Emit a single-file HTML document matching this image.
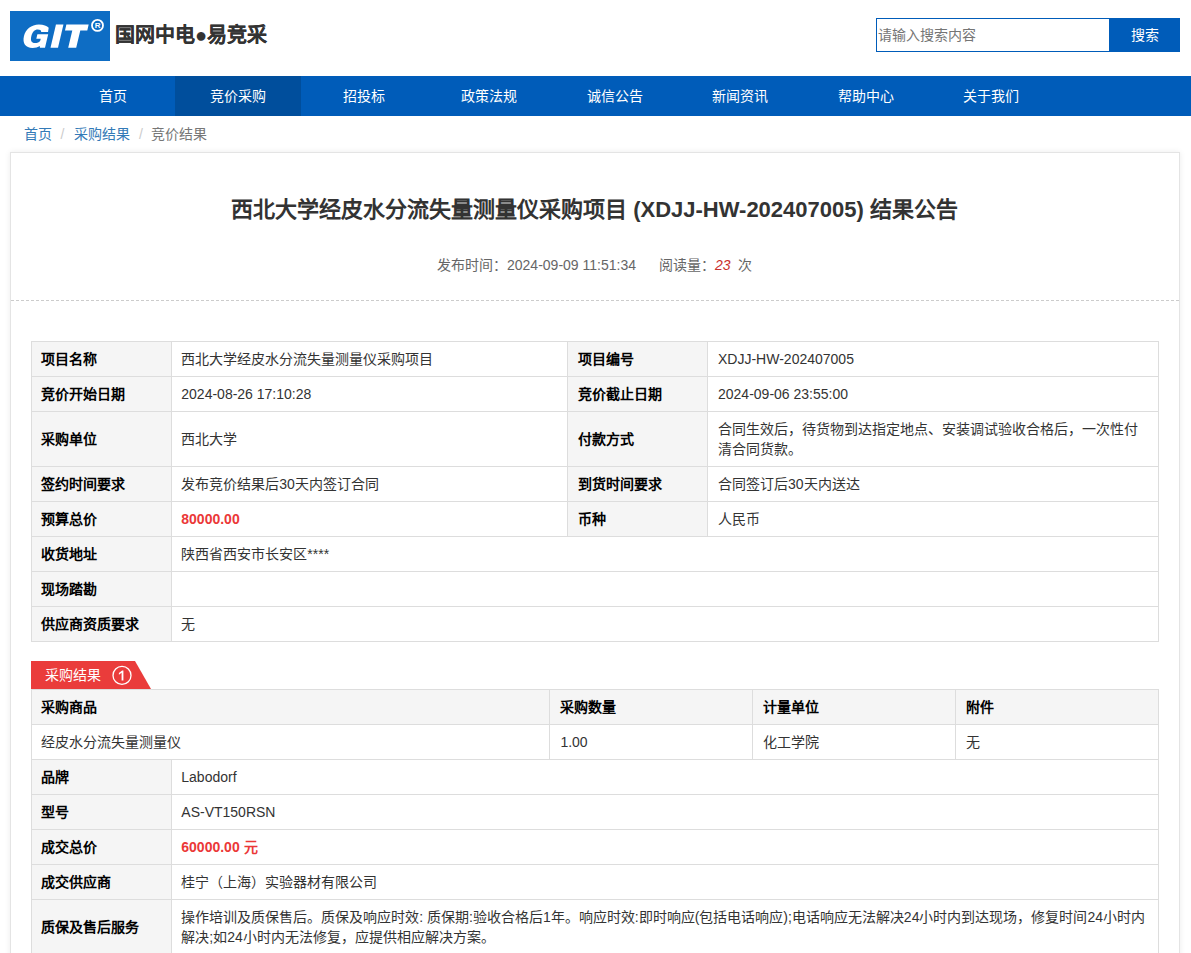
<!DOCTYPE html>
<html lang="zh-CN">
<head>
<meta charset="utf-8">
<title>结果公告</title>
<style>
*{box-sizing:border-box;}
html,body{margin:0;padding:0;}
html{overflow:hidden;}
body{width:1191px;height:953px;overflow:hidden;background:#fff;font-family:"Liberation Sans",sans-serif;font-size:14px;color:#333;position:relative;}
.abs{position:absolute;}
#logo{left:10px;top:11px;width:100px;height:50px;background:#0e6dc4;}
#logo .git{position:absolute;left:13px;top:9px;font-size:32px;line-height:32px;font-weight:bold;font-style:italic;color:#fff;letter-spacing:1px;}
#logo .reg{position:absolute;left:81px;top:7px;width:12px;height:12px;border:1.5px solid #fff;border-radius:50%;color:#fff;font-size:8px;line-height:9px;text-align:center;font-weight:bold;}
#brand{left:115px;top:21px;font-size:20px;line-height:28px;font-weight:bold;color:#333;white-space:nowrap;-webkit-text-stroke:0.08px #333;}
#search{left:876px;top:18px;width:304px;height:34px;border:1px solid #005cb9;background:#fff;}
#search .ph{position:absolute;left:1px;top:0;line-height:32px;font-size:14px;color:#757575;}
#search .btn{position:absolute;right:-1px;top:-1px;width:71px;height:34px;background:#005cb9;color:#fff;font-size:14px;font-weight:500;line-height:34px;text-align:center;}
#nav{left:0;top:76px;width:1191px;height:40px;background:#005cb9;}
#nav a{position:absolute;top:0;height:40px;width:125.5px;line-height:40px;text-align:center;color:#fff;font-size:14px;font-weight:500;}
#nav a.on{background:#004e9c;}
#crumb{left:0;top:124px;font-size:14px;line-height:20px;white-space:nowrap;color:#777;}
#crumb .l{color:#337ab7;}
#crumb .s{color:#ccc;}
#crumb span{position:absolute;top:0;}
#card{left:10px;top:152px;width:1170px;height:830px;border:1px solid #e4e4e4;box-shadow:0 0 6px rgba(0,0,0,.08);background:#fff;}
#title{left:0;top:194px;width:1189px;text-align:center;font-size:22px;line-height:32px;font-weight:bold;color:#333;white-space:nowrap;}
#meta{left:0;top:255px;width:1189px;font-size:14px;line-height:20px;color:#666;white-space:nowrap;}
#meta i{color:#c9302c;}
#meta span,#meta i{position:absolute;top:0;}
#dash{left:11px;top:300px;width:1168px;border-top:1px dashed #ccc;}
table{border-collapse:collapse;table-layout:fixed;position:absolute;left:31px;width:1127px;font-size:14px;color:#333;}
td,th{border:1px solid #ddd;padding:0 10px 0 9.3px;height:35px;text-align:left;vertical-align:middle;line-height:20px;font-weight:normal;overflow:hidden;white-space:nowrap;}
th{background:#f5f5f5;font-weight:bold;color:#000;}
td.w{white-space:normal;}
.red{color:#eb3838;font-weight:bold;}
#t1{top:341px;}
#t1 td+th,#t1 td+th+td{padding-left:10px;}
#t2{top:689px;}
#t2 td+td,#t2 th+th{padding-left:10.4px;}
#t3{top:759px;}
#tag{left:31px;top:661px;width:120px;height:28px;}
#tag span{position:absolute;left:14px;top:0;line-height:28px;color:#fff;font-size:14px;}
#tag b{position:absolute;left:81px;top:5px;width:18px;height:18px;border:1px solid #fff;border-radius:50%;color:#fff;font-size:13px;line-height:16px;text-align:center;font-weight:normal;}
</style>
</head>
<body>
<div id="logo" class="abs"><svg width="100" height="50" viewBox="10 11 100 50" style="position:absolute;left:0;top:0">
<g fill="#fff" transform="translate(0,47.7) skewX(-13.3) translate(0,-47.7)">
<path d="M44.3 31.9 L44 27.8 C42 25.8 38 24.5 33.4 24.5 C25.8 24.5 21.2 29.5 21.2 36.2 C21.2 43 25.5 47.9 32.6 47.9 C35.6 47.9 37.8 47.2 39.4 46 L39.9 47.7 L45 47.7 L45 34.2 L34.2 34.2 L34.2 38.8 L38.6 38.8 L38.6 40.4 C38.2 42.2 36 43 33.8 43 C30.3 43 28.6 40.5 28.6 36.2 C28.6 32 30.3 29.5 33.5 29.5 C35.6 29.5 37 30.3 37.5 31.9 Z"/>
<rect x="50.5" y="24.6" width="7.5" height="23.1"/>
<path d="M60.9 24.6 H83.2 V30.4 H76.2 V47.7 H68.2 V30.4 H60.9 Z"/>
</g>
<circle cx="97.5" cy="25.4" r="5.5" fill="none" stroke="#fff" stroke-width="1.8"/>
<text x="97.6" y="28.2" font-size="8" font-weight="bold" fill="#fff" text-anchor="middle" font-family="Liberation Sans, sans-serif">R</text>
</svg></div>
<div id="brand" class="abs">国网中电●易竞采</div>
<div id="search" class="abs"><span class="ph">请输入搜索内容</span><span class="btn">搜索</span></div>
<div id="nav" class="abs">
<a style="left:50px">首页</a><a class="on" style="left:175px;width:126px">竞价采购</a><a style="left:301px">招投标</a><a style="left:426.5px">政策法规</a><a style="left:552px">诚信公告</a><a style="left:677.5px">新闻资讯</a><a style="left:803px">帮助中心</a><a style="left:928.5px">关于我们</a>
</div>
<div id="crumb" class="abs"><span class="l" style="left:24px">首页</span><span class="s" style="left:60.5px">/</span><span class="l" style="left:73.8px">采购结果</span><span class="s" style="left:139px">/</span><span style="left:150.7px">竞价结果</span></div>
<div id="card" class="abs"></div>
<div id="title" class="abs">西北大学经皮水分流失量测量仪采购项目 (XDJJ-HW-202407005) 结果公告</div>
<div id="meta" class="abs"><span style="left:437px">发布时间：2024-09-09 11:51:34</span><span style="left:658.5px">阅读量：</span><i style="left:715px">23</i><span style="left:737.5px">次</span></div>
<div id="dash" class="abs"></div>
<table id="t1">
<colgroup><col style="width:140px"><col style="width:396px"><col style="width:140px"><col style="width:451px"></colgroup>
<tr><th>项目名称</th><td>西北大学经皮水分流失量测量仪采购项目</td><th>项目编号</th><td>XDJJ-HW-202407005</td></tr>
<tr><th>竞价开始日期</th><td>2024-08-26 17:10:28</td><th>竞价截止日期</th><td>2024-09-06 23:55:00</td></tr>
<tr><th style="height:55px">采购单位</th><td>西北大学</td><th>付款方式</th><td class="w">合同生效后，待货物到达指定地点、安装调试验收合格后，一次性付清合同货款。</td></tr>
<tr><th>签约时间要求</th><td>发布竞价结果后30天内签订合同</td><th>到货时间要求</th><td>合同签订后30天内送达</td></tr>
<tr><th>预算总价</th><td class="red">80000.00</td><th>币种</th><td>人民币</td></tr>
<tr><th>收货地址</th><td colspan="3">陕西省西安市长安区****</td></tr>
<tr><th>现场踏勘</th><td colspan="3"></td></tr>
<tr><th>供应商资质要求</th><td colspan="3">无</td></tr>
</table>
<div id="tag" class="abs"><svg width="120" height="28" style="position:absolute;left:0;top:0"><polygon points="0,0 104,0 120,28 0,28" fill="#ea3c3b"/></svg><span>采购结果</span><svg width="22" height="22" style="position:absolute;left:80px;top:3px"><circle cx="11" cy="11.4" r="9" fill="none" stroke="#fff" stroke-width="1.3"/><path d="M7.9 9.1 L11.1 6.5 H12.4 V16.4 H10.6 V8.7 L7.9 10.8 Z" fill="#fff"/></svg></div>
<table id="t2">
<colgroup><col style="width:518px"><col style="width:203px"><col style="width:203px"><col style="width:203px"></colgroup>
<tr><th>采购商品</th><th>采购数量</th><th>计量单位</th><th>附件</th></tr>
<tr><td>经皮水分流失量测量仪</td><td>1.00</td><td>化工学院</td><td>无</td></tr>
</table>
<table id="t3">
<colgroup><col style="width:140px"><col style="width:987px"></colgroup>
<tr><th>品牌</th><td>Labodorf</td></tr>
<tr><th>型号</th><td>AS-VT150RSN</td></tr>
<tr><th>成交总价</th><td class="red">60000.00 元</td></tr>
<tr><th>成交供应商</th><td>桂宁（上海）实验器材有限公司</td></tr>
<tr><th style="height:55px">质保及售后服务</th><td class="w">操作培训及质保售后。质保及响应时效: 质保期:验收合格后1年。响应时效:即时响应(包括电话响应);电话响应无法解决24小时内到达现场，修复时间24小时内解决;如24小时内无法修复，应提供相应解决方案。</td></tr>
</table>
</body>
</html>
